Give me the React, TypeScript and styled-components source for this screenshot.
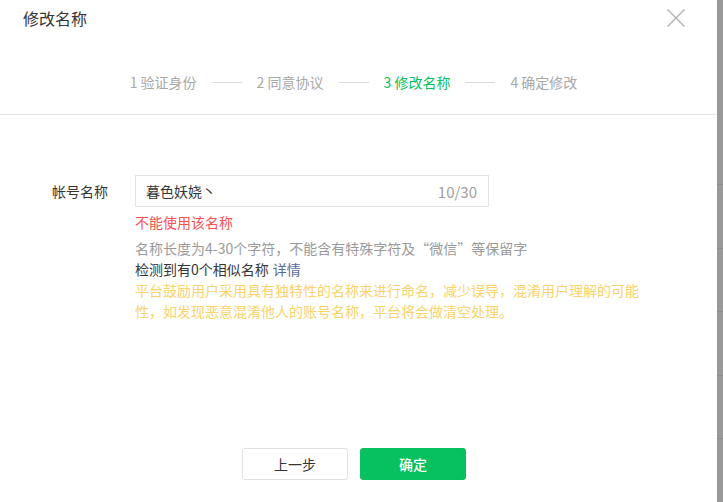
import React from "react";
import styled, { createGlobalStyle } from "styled-components";

const GlobalStyle = createGlobalStyle`
  html, body {
    margin: 0;
    padding: 0;
    height: 100%;
    overflow: hidden;
    background: #fff;
  }
  body {
    font-family: "Noto Sans CJK SC", "Noto Sans", sans-serif;
    color: #353535;
  }
`

const Page = styled.div`
  display: flex;
  height: 100vh;
`

const Dialog = styled.div`
  width: 717px;
  flex: none;
  display: flex;
  flex-direction: column;
  background: #fff;
`

// the page behind the mask, only a strip of it shows at the right
const Backdrop = styled.div`
  flex: 1;
  background: #999;
  padding-top: 184px;
  display: flex;
  flex-direction: column;
`
const BackdropRow = styled.div`
  height: 63px;
  border-top: 1px solid #8c8c8c;
`

const Header = styled.div`
  border-bottom: 1px solid #e5e5e5;
  height: 114px;
`

const TitleBar = styled.div`
  height: 35px;
  display: flex;
  align-items: center;
  justify-content: space-between;
  padding: 0 32px 0 23px;
`
const Title = styled.h3`
  margin: 0;
  font-size: 16px;
  font-weight: 400;
  color: #353535;
`
const CloseButton = styled.button`
  width: 18px;
  height: 18px;
  padding: 0;
  border: 0;
  background: none;
  cursor: pointer;
  display: flex;
`

const Steps = styled.ol`
  list-style: none;
  margin: 37px 0 0;
  padding: 0 10px 0 0;
  display: flex;
  justify-content: center;
  align-items: center;
  line-height: 20px;
  font-size: 14px;
`
const Step = styled.li<{ $active?: boolean }>`
  color: ${p => (p.$active ? "#07c160" : "#a8a8a8")};
  white-space: nowrap;
`
const StepLine = styled.li`
  width: 30px;
  height: 1px;
  margin: 0 15px;
  background: #dcdcdc;
`

const Body = styled.div`
  padding: 60px 0 0 52px;
`

const FormRow = styled.div`
  display: grid;
  grid-template-columns: 83px 512px;
  font-size: 14px;
`
const Label = styled.label`
  line-height: 32px;
  color: #353535;
`

const Field = styled.div`
  display: flex;
  flex-direction: column;
`

const InputBox = styled.div`
  width: 354px;
  height: 32px;
  box-sizing: border-box;
  border: 1px solid #e4e4e4;
  display: flex;
  align-items: center;
  padding: 0 11px 0 10px;
`
const Input = styled.input`
  flex: 1;
  min-width: 0;
  border: 0;
  outline: none;
  padding: 0;
  font: inherit;
  font-size: 14px;
  color: #353535;
  background: transparent;
`
const Counter = styled.span`
  color: #a0a0a0;
  font-size: 15px;
`

const Tip = styled.p<{ $tone?: "error" | "muted" | "normal" | "warn" }>`
  margin: 0;
  line-height: 21px;
  color: ${p =>
    p.$tone === "error"
      ? "#fa5151"
      : p.$tone === "muted"
      ? "#9a9a9a"
      : p.$tone === "warn"
      ? "#fbd36a"
      : "#353535"};
`
const ErrorTip = styled(Tip)`
  margin: 4px 0 5px;
  line-height: 22px;
`
const Link = styled.a`
  color: #576b95;
  text-decoration: none;
  margin-left: 4px;
`

const Footer = styled.div`
  margin-top: auto;
  padding: 0 9px 22px 0;
  display: flex;
  justify-content: center;
  gap: 12px;
`
const Button = styled.button<{ $primary?: boolean }>`
  width: 106px;
  height: 32px;
  border-radius: 3px;
  font: inherit;
  font-size: 14px;
  font-weight: ${p => (p.$primary ? 500 : 400)};
  cursor: pointer;
  border: 1px solid ${p => (p.$primary ? "#07c160" : "#e0e0e0")};
  background: ${p => (p.$primary ? "#07c160" : "#fff")};
  color: ${p => (p.$primary ? "#fff" : "#353535")};
`

const steps = ["1 验证身份", "2 同意协议", "3 修改名称", "4 确定修改"];

const App: React.FC = () => {
  const name = "暮色妖娆丶";
  return (
    <>
      <GlobalStyle />
      <Page>
        <Dialog>
          <Header>
            <TitleBar>
              <Title>修改名称</Title>
              <CloseButton aria-label="关闭">
                <svg width="18" height="18" viewBox="0 0 18 18">
                  <path d="M0.5 0.5 L17.5 17.5 M17.5 0.5 L0.5 17.5" stroke="#b2b2b2" strokeWidth="1.4" fill="none" />
                </svg>
              </CloseButton>
            </TitleBar>
            <Steps>
              {steps.map((s, i) => (
                <React.Fragment key={s}>
                  {i > 0 && <StepLine />}
                  <Step $active={i === 2}>{s}</Step>
                </React.Fragment>
              ))}
            </Steps>
          </Header>

          <Body>
            <FormRow>
              <Label>帐号名称</Label>
              <Field>
                <InputBox>
                  <Input defaultValue={name} />
                  <Counter>10/30</Counter>
                </InputBox>
                <ErrorTip $tone="error">不能使用该名称</ErrorTip>
                <Tip $tone="muted">名称长度为4-30个字符，不能含有特殊字符及“微信”等保留字</Tip>
                <Tip>
                  检测到有0个相似名称<Link href="#">详情</Link>
                </Tip>
                <Tip $tone="warn">
                  平台鼓励用户采用具有独特性的名称来进行命名，减少误导，混淆用户理解的可能性，如发现恶意混淆他人的账号名称，平台将会做清空处理。
                </Tip>
              </Field>
            </FormRow>
          </Body>

          <Footer>
            <Button>上一步</Button>
            <Button $primary>确定</Button>
          </Footer>
        </Dialog>
        <Backdrop>
          {[0, 1, 2, 3, 4].map(i => (
            <BackdropRow key={i} />
          ))}
        </Backdrop>
      </Page>
    </>
  );
};

export default App;
